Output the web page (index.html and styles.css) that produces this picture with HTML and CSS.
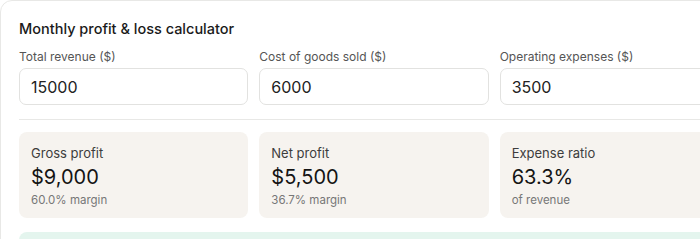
FILE: index.html
```html
<!DOCTYPE html>
<html lang="en">
<head>
  <meta charset="UTF-8">
  <title>Monthly profit &amp; loss calculator</title>
  <link rel="stylesheet" href="styles.css">
</head>
<body>
  <div class="calc">
    <h2 class="calc-title">Monthly profit &amp; loss calculator</h2>
    <div class="fields">
      <label class="field">
        <span class="field-label">Total revenue ($)</span>
        <input class="field-input" type="text" value="15000">
      </label>
      <label class="field">
        <span class="field-label">Cost of goods sold ($)</span>
        <input class="field-input" type="text" value="6000">
      </label>
      <label class="field">
        <span class="field-label">Operating expenses ($)</span>
        <input class="field-input" type="text" value="3500">
      </label>
    </div>
    <hr class="divider">
    <div class="stats">
      <div class="stat">
        <div class="stat-label">Gross profit</div>
        <div class="stat-value">$9,000</div>
        <div class="stat-sub">60.0% margin</div>
      </div>
      <div class="stat">
        <div class="stat-label">Net profit</div>
        <div class="stat-value">$5,500</div>
        <div class="stat-sub">36.7% margin</div>
      </div>
      <div class="stat">
        <div class="stat-label">Expense ratio</div>
        <div class="stat-value">63.3%</div>
        <div class="stat-sub">of revenue</div>
      </div>
    </div>
    <div class="status"></div>
  </div>
</body>
</html>
```

FILE: styles.css
```css
html, body { margin:0; padding:0; background:#fff; overflow:hidden; font-family:Inter, "Noto Sans", sans-serif; color:#1f1f1f; }
.calc { width:710px; padding:18px; border:1px solid #e8e8e6; border-radius:12px; background:#fff; }
.calc-title { margin:0 0 9px; font-size:14.5px; line-height:20px; font-weight:500; color:#1a1a1a; }
.fields { display:grid; grid-template-columns:repeat(3, minmax(0, 1fr)); gap:11px; }
.field { display:flex; flex-direction:column; min-width:0; }
.field-label { font-size:12px; line-height:18px; color:#555; margin-bottom:2px; }
.field-input { box-sizing:border-box; width:100%; height:37px; padding:0 11px; border:1px solid #e2e2e0; border-radius:7px; font:inherit; font-size:16px; color:#222; background:#fff; outline:none; }
.divider { border:none; border-top:1px solid #e8e8e6; margin:14px 0 12px; }
.stats { display:grid; grid-template-columns:repeat(3, minmax(0, 1fr)); gap:11px; }
.stat { background:#f6f3ef; border-radius:8px; padding:12px 12px 10px; }
.stat-label { font-size:13px; line-height:18px; color:#3d3d3d; }
.stat-value { font-size:20px; line-height:30px; color:#141414; }
.stat-sub { font-size:11.5px; line-height:16px; color:#777; }
.status { margin-top:14px; height:44px; background:#e4f5ee; border-radius:8px; }
```
